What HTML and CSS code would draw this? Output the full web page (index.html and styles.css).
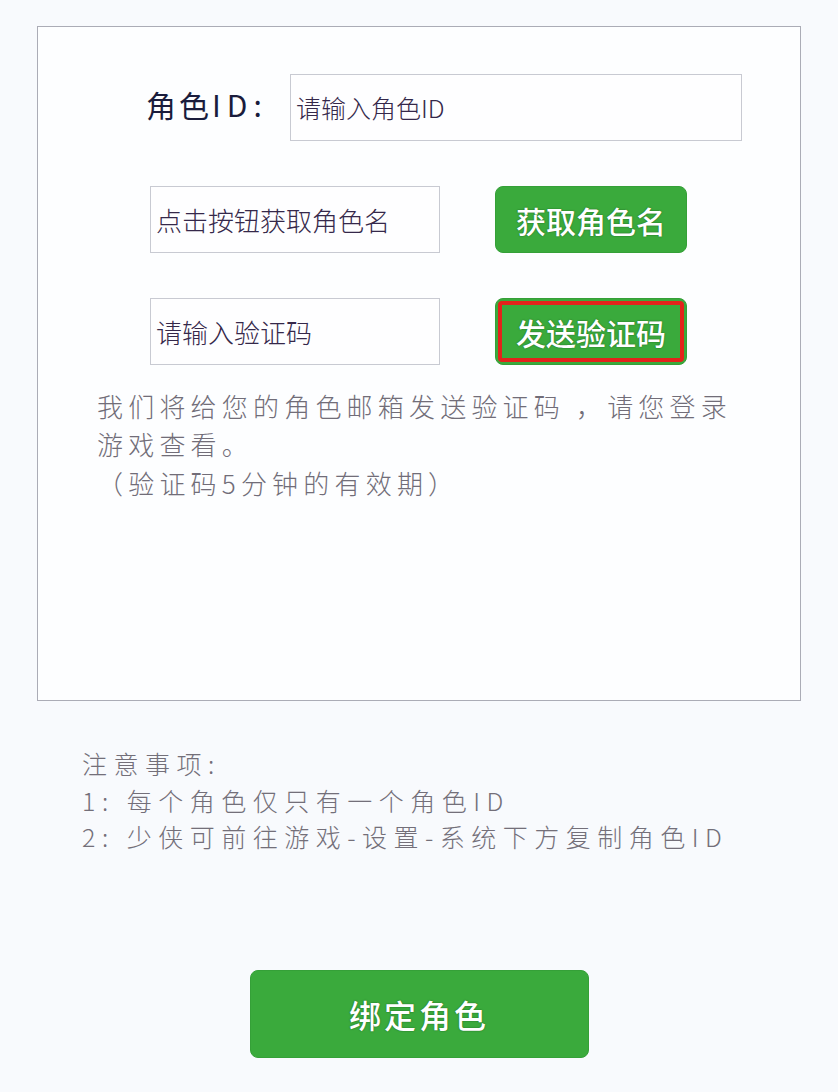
FILE: index.html
```html
<!DOCTYPE html>
<html lang="zh-CN">
<head>
<meta charset="utf-8">
<title>绑定角色</title>
<link rel="stylesheet" href="styles.css">
</head>
<body>
<div class="page">
  <div class="card">
    <div class="row row-id">
      <div class="label">角色<span class="latin">ID</span>:</div>
      <div class="field field-wide">请输入角色ID</div>
    </div>
    <div class="row row-pair">
      <div class="field field-short">点击按钮获取角色名</div>
      <div class="btn">获取角色名</div>
    </div>
    <div class="row row-pair">
      <div class="field field-short">请输入验证码</div>
      <div class="btn btn-marked"><span class="mark">发送验证码</span></div>
    </div>
    <div class="hint">
      <p class="hint-line">我们将给您的角色邮箱发送验证码 ，请您登录</p>
      <p class="hint-line">游戏查看。</p>
      <p class="hint-line hint-sub">（验证码5分钟的有效期）</p>
    </div>
  </div>
  <div class="notes">
    <p class="note">注意事项:</p>
    <p class="note">1: 每个角色仅只有一个角色ID</p>
    <p class="note">2: 少侠可前往游戏-设置-系统下方复制角色ID</p>
  </div>
  <div class="submit-wrap">
    <div class="submit">绑定角色</div>
  </div>
</div>
</body>
</html>
```

FILE: styles.css
```css
* {
  box-sizing: border-box;
}

html, body {
  margin: 0;
  padding: 0;
  background: #f8fafd;
}

body {
  font-family: "Noto Sans CJK SC", "Noto Sans", sans-serif;
  width: 838px;
  height: 1092px;
  overflow: hidden;
}

.page {
  padding-top: 26px;
}

.card {
  margin-left: 37px;
  width: 764px;
  height: 675px;
  background: #fdfeff;
  border: 1px solid #abacb6;
  padding-top: 47px;
}

.row {
  display: flex;
  align-items: center;
}

.row-id {
  padding-left: 108px;
}

.label {
  width: 144px;
  font-size: 30px;
  letter-spacing: 3px;
  color: #1a1c3c;
  line-height: 40px;
  padding-bottom: 8px;
}

.latin {
  letter-spacing: 6px;
}

.field {
  background: #fefeff;
  border: 1px solid #c8cad2;
  color: #35284a;
  font-size: 26px;
  font-weight: 300;
  padding-left: 5px;
  display: flex;
  align-items: center;
}

.field-wide {
  width: 452px;
  height: 67px;
  font-size: 25px;
  padding-bottom: 2px;
}

.row-pair {
  padding-left: 112px;
  gap: 55px;
  margin-top: 45px;
}

.field-short {
  width: 290px;
  height: 67px;
}

.btn {
  width: 192px;
  height: 67px;
  background: #3aaa3c;
  border: 1px solid #35a038;
  border-radius: 8px;
  color: #ffffff;
  font-size: 30px;
  font-weight: 500;
  display: flex;
  align-items: center;
  justify-content: center;
  text-shadow: 0 0 1.5px rgba(0, 50, 0, 0.7);
}

.btn-marked {
  padding: 2px;
}

.mark {
  flex: 1;
  align-self: stretch;
  border: 4px solid #e3231b;
  border-radius: 4px;
  display: flex;
  align-items: center;
  justify-content: center;
}

.hint {
  padding-left: 59px;
  margin-top: 22px;
  color: #716d78;
  font-size: 26px;
  font-weight: 300;
  letter-spacing: 5.2px;
}

.hint-line {
  margin: 0;
  line-height: 38px;
  white-space: nowrap;
}

.hint-sub {
  margin-top: 1px;
}

.notes {
  padding-left: 82px;
  margin-top: 44px;
  color: #736f79;
  font-size: 25px;
  font-weight: 300;
  letter-spacing: 6.5px;
}

.note {
  margin: 0;
  line-height: 36.5px;
  white-space: nowrap;
}

.submit-wrap {
  display: flex;
  justify-content: center;
  margin-top: 115px;
}

.submit {
  width: 339px;
  height: 88px;
  background: #3aaa3c;
  border: 1px solid #35a038;
  border-radius: 8px;
  color: #ffffff;
  font-size: 32px;
  font-weight: 500;
  letter-spacing: 3px;
  display: flex;
  align-items: center;
  justify-content: center;
  text-shadow: 0 0 1.5px rgba(0, 50, 0, 0.7);
}
```
